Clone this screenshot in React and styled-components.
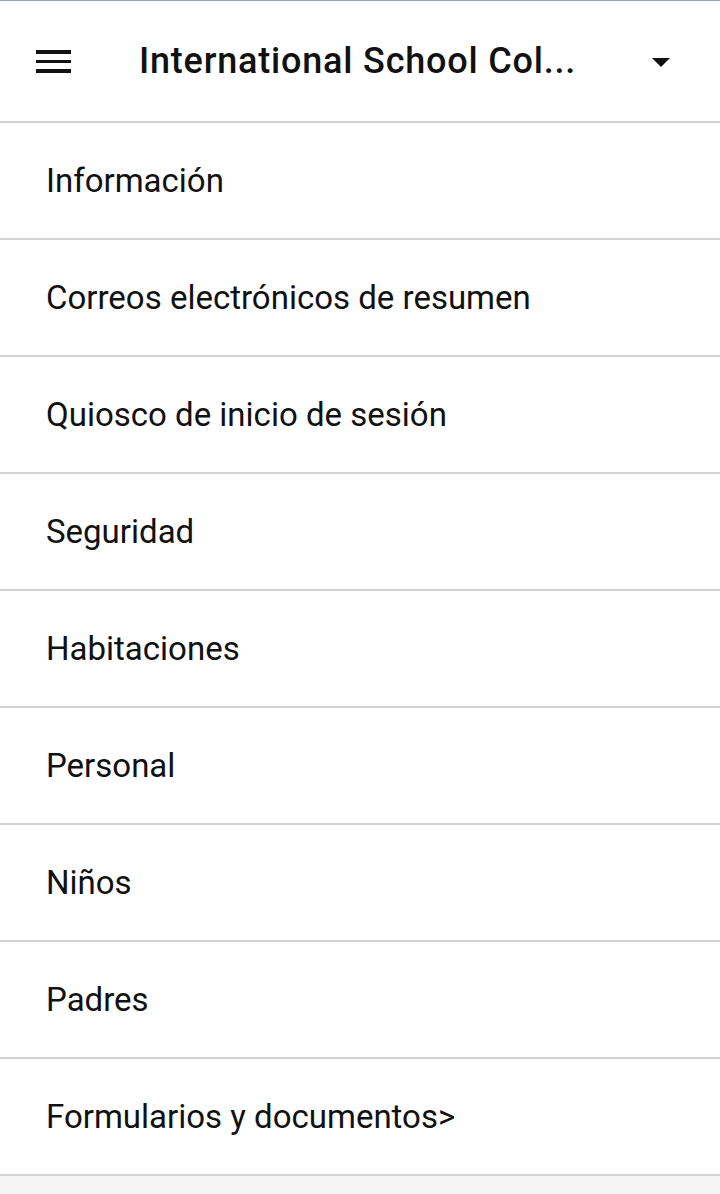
import React from "react";
import styled, { createGlobalStyle } from "styled-components";

const Global = createGlobalStyle`
  html, body { margin: 0; padding: 0; background: #f5f5f5; }
  body { font-family: Roboto, "Noto Sans", "Liberation Sans", sans-serif; }
  * { box-sizing: border-box; }
`;

const Page = styled.div`
  width: 720px;
  min-height: 1194px;
  background: #f5f5f5;
  border-top: 1px solid #8ea6b6;
`;

const Header = styled.header`
  height: 122px;
  background: #ffffff;
  border-bottom: 2px solid #d2d2d4;
  display: flex;
  align-items: center;
  padding: 0 0 0 36px;
`;

const MenuButton = styled.div`
  width: 35px;
  display: flex;
  flex-direction: column;
  gap: 6px;
  margin-right: 68px;
  margin-top: 1px;
`;

const Bar = styled.span`
  display: block;
  height: 3.5px;
  background: #111;
`;

const Title = styled.h1`
  margin: 0;
  flex: 1;
  font-size: 36px;
  font-weight: 500;
  color: #111;
  white-space: nowrap;
  letter-spacing: 0.8px;
`;

const Caret = styled.div`
  width: 0;
  height: 0;
  border-left: 9px solid transparent;
  border-right: 9px solid transparent;
  border-top: 9px solid #111;
  margin-right: 50px;
  margin-top: 2px;
`;

const List = styled.ul`
  list-style: none;
  margin: 0;
  padding: 0;
  background: #ffffff;
`;

const Item = styled.li`
  height: 117px;
  border-bottom: 2px solid #d2d2d4;
  display: flex;
  align-items: center;
  padding-left: 46px;
  font-size: 33px;
  color: #111;
`;

const items = [
  "Información",
  "Correos electrónicos de resumen",
  "Quiosco de inicio de sesión",
  "Seguridad",
  "Habitaciones",
  "Personal",
  "Niños",
  "Padres",
  "Formularios y documentos>",
];

export default function App() {
  return (
    <>
      <Global />
      <Page>
        <Header>
          <MenuButton>
            <Bar />
            <Bar />
            <Bar />
          </MenuButton>
          <Title>International School Col...</Title>
          <Caret />
        </Header>
        <List>
          {items.map((t) => (
            <Item key={t}>{t}</Item>
          ))}
        </List>
      </Page>
    </>
  );
}
